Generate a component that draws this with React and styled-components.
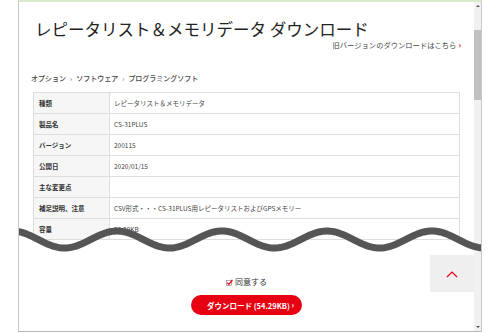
import React from "react";
import styled, { createGlobalStyle } from "styled-components";

const Global = createGlobalStyle`
  html, body { margin: 0; padding: 0; background: #fff; }
  body { font-family: "Noto Sans CJK JP", "Noto Sans", sans-serif; color: #333; }
`;

const Frame = styled.div`
  position: relative;
  margin-left: 18px;
  width: 462px;
  height: 329px;
  border-left: 1px solid #c8c8c8;
  border-right: 1px solid #c8c8c8;
  border-bottom: 1px solid #b8b8b8;
  border-top: 2px solid #d7eacb;
  display: flex;
  overflow: hidden;
`;

const Content = styled.div`
  flex: 1;
  display: flex;
  flex-direction: column;
  padding: 0 14px;
  min-width: 0;
`;

const Title = styled.h1`
  margin: 0 0 0 2px;
  padding-top: 16px;
  font-size: 16.5px;
  line-height: 22px;
  font-weight: 400;
  color: #222;
  white-space: nowrap;
`;

const OldLink = styled.div`
  display: flex;
  justify-content: flex-end;
  align-items: center;
  gap: 2px;
  margin-right: -1px;
  font-size: 7.3px;
  line-height: 10px;
  color: #444;
`;

const RedChevron = styled.span`
  color: #e60012;
  font-weight: 700;
  font-size: 8px;
`;

const Crumbs = styled.div`
  margin: 23px 0 0 -2px;
  font-size: 7px;
  line-height: 10px;
  font-weight: 500;
  color: #444;
  display: flex;
  gap: 4px;
`;

const Sep = styled.span`
  color: #777;
`;

const Table = styled.div`
  margin-top: 9px;
  border: 1px solid #dedede;
  border-bottom: none;
`;

const Row = styled.div`
  display: grid;
  grid-template-columns: 76px 1fr;
  height: 20px;
  border-bottom: 1px solid #dedede;
`;

const Label = styled.div`
  box-sizing: border-box;
  background: #f6f6f6;
  border-right: 1px solid #dedede;
  padding-left: 5px;
  font-size: 6.5px;
  font-weight: 700;
  color: #333;
  display: flex;
  align-items: center;
`;

const Value = styled.div`
  padding-left: 4px;
  font-size: 6.5px;
  color: #444;
  display: flex;
  align-items: center;
  white-space: nowrap;
`;

const Agree = styled.label`
  margin-top: 36px;
  display: flex;
  justify-content: center;
  align-items: center;
  gap: 2px;
  font-size: 8px;
  line-height: 12px;
  color: #333;
`;

const DownloadButton = styled.button`
  position: relative;
  margin: 7px auto 0;
  width: 111px;
  height: 20px;
  border: none;
  border-radius: 10px;
  background: #e60012;
  color: #fff;
  font-family: inherit;
  font-size: 7.5px;
  font-weight: 700;
  display: flex;
  align-items: center;
  padding: 0 0 0 16px;
`;

const BtnChevron = styled.span`
  position: absolute;
  right: 8px;
  top: 50%;
  transform: translateY(-52%);
  font-size: 8px;
`;

const Scroll = styled.div`
  width: 7px;
  background: #f1f1f1;
  display: flex;
  flex-direction: column;
  align-items: center;
`;

const Arrow = styled.div`
  margin: ${(p) => (p.$down ? "0 0 3px" : "3px 0 0")};
  width: 0;
  height: 0;
  border-left: 2px solid transparent;
  border-right: 2px solid transparent;
  ${(p) => (p.$down ? "border-top: 2px solid #555;" : "border-bottom: 2px solid #555;")}
`;

const Thumb = styled.div`
  margin-top: 23px;
  width: 7px;
  height: 70px;
  background: #c1c1c1;
`;

const Spacer = styled.div`
  flex: 1;
`;

const ToTop = styled.div`
  position: absolute;
  left: 411px;
  top: 253px;
  width: 44px;
  height: 37px;
  background: #efefef;
  display: flex;
  align-items: center;
  justify-content: center;
`;

const WaveSvg = styled.svg`
  position: absolute;
  left: 0;
  top: 216px;
  pointer-events: none;
`;

const rows = [
  ["種類", "レピータリスト＆メモリデータ"],
  ["製品名", "CS-31PLUS"],
  ["バージョン", "200115"],
  ["公開日", "2020/01/15"],
  ["主な変更点", ""],
  ["補足説明、注意", "CSV形式・・・CS-31PLUS用レピータリストおよびGPSメモリー"],
  ["容量", "54.29KB"],
];

function wavePath() {
  const pts = [];
  for (let xp = 14; xp <= 486; xp += 2) {
    const yp = 239.5 - 8.5 * Math.cos((2 * Math.PI * (xp - 12)) / 105);
    pts.push(`${(xp - 19).toFixed(1)},${(yp - 218).toFixed(2)}`);
  }
  return "M" + pts.join(" L");
}

export default function App() {
  return (
    <>
      <Global />
      <Frame>
        <Content>
          <Title>レピータリスト＆メモリデータ ダウンロード</Title>
          <OldLink>
            旧バージョンのダウンロードはこちら<RedChevron>›</RedChevron>
          </OldLink>
          <Crumbs>
            <span>オプション</span>
            <Sep>›</Sep>
            <span>ソフトウェア</span>
            <Sep>›</Sep>
            <span>プログラミングソフト</span>
          </Crumbs>
          <Table>
            {rows.map(([k, v]) => (
              <Row key={k}>
                <Label>{k}</Label>
                <Value>{v}</Value>
              </Row>
            ))}
          </Table>
          <Agree>
            <svg width="7" height="7" viewBox="0 0 7 7">
              <rect x="0.5" y="1.5" width="5" height="5" fill="#fff" stroke="#999" strokeWidth="0.8" />
              <path d="M1.3 3.8 L2.9 5.4 L6.4 1" fill="none" stroke="#e60012" strokeWidth="1.3" />
            </svg>
            同意する
          </Agree>
          <DownloadButton>
            ダウンロード (54.29KB)
            <BtnChevron>›</BtnChevron>
          </DownloadButton>
        </Content>
        <Scroll>
          <Arrow />
          <Thumb />
          <Spacer />
          <Arrow $down />
        </Scroll>
        <ToTop>
          <svg width="12" height="8" viewBox="0 0 12 8">
            <path d="M1 7 L6 2 L11 7" fill="none" stroke="#e60012" strokeWidth="1.2" />
          </svg>
        </ToTop>
        <WaveSvg width="462" height="44" viewBox="0 0 462 44">
          <path d={wavePath()} fill="none" stroke="#555" strokeWidth="7" />
        </WaveSvg>
      </Frame>
    </>
  );
}
